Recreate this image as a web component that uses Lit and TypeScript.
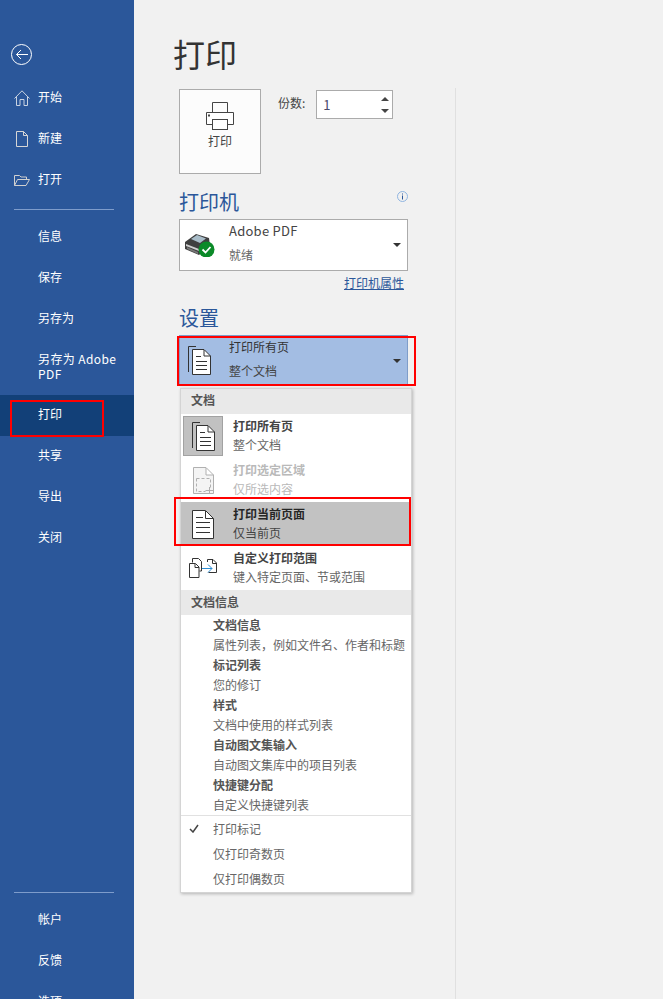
import { LitElement, html, css, svg } from "lit";
import { customElement } from "lit/decorators.js";

const icons = {
  home: html`<svg width="16" height="16" viewBox="0 0 16 16" fill="none" stroke="#c9d3e2"><path d="M.5 8.500 8 .8l7.500 7.700M2.500 6.500v9h3.500v-6h4v6h3.500v-9"/></svg>`,
  file: html`<svg width="12" height="16" viewBox="0 0 12 16" fill="none" stroke="#d6d6d6"><path d="M.5.5v15h11V4.500L7.500.5ZM7.500.5v4h4"/></svg>`,
  folder: html`<svg width="16" height="11" viewBox="0 0 16 11" fill="none" stroke="#d0d0d0"><path d="M.5 10.500V.5h5l1.500 1.500h5.500v2M.5 10.500h11.500l3.500-6H3.500Z"/></svg>`,
  printer: html`<svg width="28" height="28" viewBox="0 0 28 28" fill="none" stroke="#444"><path d="M6.500 10V.5h15V10"/><path d="M6.500 22.500h-6v-12h27v12h-6" fill="#fff"/><rect x="6.500" y="17.500" width="15" height="10" fill="#fff"/><rect x="2" y="12.500" width="2" height="2" fill="#444" stroke="none"/></svg>`,
  pages: html`<svg width="23" height="29" viewBox="0 0 23 29" fill="none" stroke="#333"><path d="M.5 26V.5H8"/><path d="M4.500 28.500v-25H16l6.500 6.500v18.500Z" fill="#fff"/><path d="M16 4v6h6.500M8 10.500h5M8 15.500h11M8 19.500h11M8 23.500h11"/></svg>`,
  selection: html`<svg width="21" height="27" viewBox="0 0 21 27" fill="#f4f4f4" stroke="#b0b0b0"><path d="M.5.5h12.500l7.500 7.500v18.500H.5ZM13 1v7h7.500"/><path d="M3.500 11.500h14v9M3.500 11.500v13h9" fill="none" stroke-dasharray="3 2"/><path d="M12.500 23.500h7.500M16.500 20v7" fill="none"/></svg>`,
  current: html`<svg width="22" height="29" viewBox="0 0 22 29" fill="#fff" stroke="#333"><path d="M.5.500H13.500L21.500 8.500V28.500H.5Z"/><path d="M13.500 1v7.500h8M4 7.500h7M4 12.500h14M4 17.500h14M4 22.500h14" fill="none"/></svg>`,
  custom: html`<svg width="28" height="20" viewBox="0 0 28 20" fill="none" stroke="#333"><path d="M3.500 4.500V.5h6l3 3v9.500h-2"/><path d="M.5 5.500h6l3.500 3.500v10.500H.5Z" fill="#fff"/><path d="M6 6v3.500h4"/><path d="M18.500 4V1.500h5.500l3.500 3.500v9.500h-8M23.500 2v3.500h4"/><path d="M13 10.500h10M19 6.500l4 4-4 4" stroke="#2a8dd4"/></svg>`,
  status: html`<svg width="30" height="24" viewBox="0 0 30 24"><path d="M0 9 11 1l13 4 1 8-11 9L0 16Z" fill="#3f3f3f"/><path d="M6 6l6-4 9 3.500-6 4.500Z" fill="#a9bdc9"/><path d="M1 11l13 5v2L1 13Z" fill="#cfcfcf"/><path d="M2 14l11 5v2L2 16Z" fill="#777"/><circle cx="21.500" cy="16.500" r="8" fill="#0b8a28"/><path d="M17.500 16.500l3 3 5-5.500" fill="none" stroke="#fff" stroke-width="1.800"/></svg>`,
};

@customElement("app-root")
export class AppRoot extends LitElement {
  static styles = css`
    :host {
      display: flex;
      width: 663px;
      height: 999px;
      overflow: hidden;
      background: #f1f1f1;
      font-family: "Microsoft YaHei", "Noto Sans CJK SC", "Noto Sans", sans-serif;
      font-size: 12px;
      color: #444;
      line-height: 16px;
    }
    * { box-sizing: border-box; }
    svg { display: block; flex: none; }

    .side {
      width: 134px;
      flex: none;
      background: #2b579a;
      color: #fff;
      display: flex;
      flex-direction: column;
    }
    .side > * { flex: none; }
    .back { padding: 44px 0 0 11px; height: 77px; }
    .nav {
      display: flex;
      align-items: center;
      height: 41px;
      padding: 0 12px 2px 38px;
      position: relative;
    }
    .nav.tall { height: 56px; line-height: 15px; letter-spacing: .4px; }
    .nav.low { padding-bottom: 4px; }
    .nav .ic { position: absolute; left: 13px; top: 1px; bottom: 0; width: 18px; display: flex; align-items: center; justify-content: center; }
    .nav.active { background: #124078; }
    .rule { height: 1px; background: #7e9ccb; margin: 9px 20px 6px 14px; }
    .gap { height: 324px; }

    .redbox { position: absolute; border: 2px solid #f00; pointer-events: none; z-index: 3; }
    .r1 { left: 10px; top: 400px; width: 94px; height: 37px; }
    .r2 { left: 177px; top: 336px; width: 239px; height: 50px; }
    .r3 { left: 174px; top: 497px; width: 237px; height: 49px; }

    .main { flex: none; width: 321px; padding: 0 0 0 45px; }
    h1 { margin: 33px 0 0 -6px; font-size: 32px; font-weight: 400; line-height: 40px; height: 56px; color: #333; }
    .top { display: flex; height: 85px; }
    .printbtn {
      width: 82px; height: 85px; background: #fcfcfc; border: 1px solid #ababab;
      display: flex; flex-direction: column; align-items: center; padding-top: 12px; gap: 3px; color: #444;
    }
    .copies { display: flex; align-items: flex-start; margin-left: 17px; gap: 11px; padding-top: 1px; }
    .copies span { line-height: 26px; }
    .num {
      width: 77px; height: 29px; background: #fff; border: 1px solid #ababab; display: flex;
      align-items: center; justify-content: space-between; padding: 0 3px 0 6px; font-size: 13px; color: #4a4a6a;
    }
    .spin { display: flex; flex-direction: column; gap: 8px; }
    .tri-up { width: 0; height: 0; border: 4px solid transparent; border-top: 0; border-bottom: 4px solid #444; }
    .tri-dn { width: 0; height: 0; border: 4px solid transparent; border-bottom: 0; border-top: 4px solid #444; }
    .headrow { display: flex; justify-content: space-between; width: 229px; margin-top: 14px; height: 31px; }
    h2 { margin: 0; font-size: 20px; font-weight: 400; line-height: 28px; color: #2b579a; }
    .info { margin-top: 3px; }
    .select {
      width: 229px; height: 52px; background: #fff; border: 1px solid #ababab; display: flex; align-items: stretch; position: relative;
    }
    .select .ico { width: 49px; display: flex; align-items: center; padding-left: 5px; }
    .select .txt { flex: 1; display: flex; flex-direction: column; justify-content: space-between; padding: 2px 0 6px; }
    .select .a { font-size: 13px; color: #444; line-height: 18px; letter-spacing: .25px; }
    .select .b { color: #666; line-height: 18px; }
    .select .arrow { align-self: center; margin-right: 6px; }
    .link { width: 225px; text-align: right; margin-top: 3px; height: 30px; line-height: 18px; color: #2b579a; text-decoration: underline; }
    .h2b { height: 31px; }
    .select.on { background: #a3bde3; border-color: #7f9dc9; height: 51px; }
    .select.on .a { color: #333; font-size: 12px; letter-spacing: 0; }
    .select.on .b { color: #444; }
    .select.on .txt { padding-bottom: 5px; }
    .select.on .ico { padding-left: 8px; }

    .menu {
      width: 232px; height: 505px; margin: 2px 0 0 1px; background: #fff; border: 1px solid #d4d4d4;
      box-shadow: 1px 1px 3px rgba(0,0,0,.25); display: flex; flex-direction: column; padding: 0;
    }
    .menu > * { flex: none; }
    .mh { height: 25px; background: #e9e9e9; font-weight: 700; color: #555; padding-left: 10px; line-height: 22px; }
    .mh.second { line-height: 24px; }
    .mi { height: 44px; display: flex; align-items: center; }
    .mi .box { width: 44px; height: 44px; margin-right: 8px; display: flex; align-items: center; justify-content: center; flex: none; }
    .mi .box.sel { width: 40px; height: 40px; margin: 0 10px 0 2px; background: #c1c1c1; border: 1px solid #a2a2a2; }
    .tx { margin-top: -2px; }
    .mi .t { font-weight: 700; color: #444; line-height: 19px; }
    .mi .s { color: #666; line-height: 19px; }
    .mi.dis .t, .mi.dis .s { color: #b9b9b9; }
    .mi.cur { background: #c2c2c2; }
    .mi.cur .t { color: #262626; }
    .mi.cur .s { color: #444; }
    .di { height: 40px; padding-left: 32px; }
    .di .t { font-weight: 700; color: #555; line-height: 20px; }
    .di .s { color: #666; line-height: 20px; white-space: nowrap; }
    .sep { height: 1px; background: #e1e1e1; }
    .opt { height: 25px; line-height: 25px; padding-left: 32px; color: #666; position: relative; }
    .chk { position: absolute; left: 8px; top: 8px; }

    .pane { flex: 1; }
    .pane div { margin-top: 88px; height: 911px; border-left: 1px solid #e0e0e0; }
  `;

  private nav(label: string, ic?: unknown, cls = "") {
    return html`<div class="nav ${cls}">${ic ? html`<span class="ic">${ic}</span>` : ""}<span>${label}</span></div>`;
  }

  render() {
    const arrow = html`<svg class="arrow" width="8" height="4" viewBox="0 0 8 4"><path d="M0 0h8L4 4Z" fill="#333"/></svg>`;
    return html`
      <div class="redbox r1"></div>
      <div class="redbox r2"></div>
      <div class="redbox r3"></div>

      <aside class="side">
        <div class="back">
          <svg width="21" height="21" viewBox="0 0 21 21" fill="none" stroke="#fff"><circle cx="10.500" cy="10.500" r="10"/><path d="M17 10.500H5.500M10 6 5.500 10.500 10 15"/></svg>
        </div>
        ${this.nav("开始", icons.home)}
        ${this.nav("新建", icons.file)}
        ${this.nav("打开", icons.folder)}
        <div class="rule"></div>
        ${this.nav("信息")}
        ${this.nav("保存")}
        ${this.nav("另存为")}
        ${this.nav("另存为 Adobe PDF", undefined, "tall")}
        ${this.nav("打印", undefined, "active low")}
        ${this.nav("共享", undefined, "low")}
        ${this.nav("导出", undefined, "low")}
        ${this.nav("关闭", undefined, "low")}
        <div class="gap"></div>
        <div class="rule"></div>
        ${this.nav("帐户")}
        ${this.nav("反馈")}
        ${this.nav("选项")}
      </aside>

      <main class="main">
        <h1>打印</h1>
        <div class="top">
          <div class="printbtn">${icons.printer}<span>打印</span></div>
          <div class="copies">
            <span>份数:</span>
            <div class="num">1<div class="spin"><i class="tri-up"></i><i class="tri-dn"></i></div></div>
          </div>
        </div>

        <div class="headrow">
          <h2>打印机</h2>
          <svg class="info" width="11" height="11" viewBox="0 0 11 11" fill="none"><circle cx="5.500" cy="5.500" r="5" stroke="#8fb4e0"/><path d="M5.500 4.500v4M5.500 2.500v1" stroke="#2b579a"/></svg>
        </div>
        <div class="select">
          <div class="ico">${icons.status}</div>
          <div class="txt"><span class="a">Adobe PDF</span><span class="b">就绪</span></div>
          ${arrow}
        </div>
        <div class="link">打印机属性</div>

        <div class="h2b"><h2>设置</h2></div>
        <div class="select on">
          <div class="ico">${icons.pages}</div>
          <div class="txt"><span class="a">打印所有页</span><span class="b">整个文档</span></div>
          ${arrow}
        </div>

        <div class="menu">
          <div class="mh">文档</div>
          <div class="mi">
            <div class="box sel">${icons.pages}</div>
            <div class="tx"><div class="t">打印所有页</div><div class="s">整个文档</div></div>
          </div>
          <div class="mi dis">
            <div class="box">${icons.selection}</div>
            <div class="tx"><div class="t">打印选定区域</div><div class="s">仅所选内容</div></div>
          </div>
          <div class="mi cur">
            <div class="box">${icons.current}</div>
            <div class="tx"><div class="t">打印当前页面</div><div class="s">仅当前页</div></div>
          </div>
          <div class="mi">
            <div class="box">${icons.custom}</div>
            <div class="tx"><div class="t">自定义打印范围</div><div class="s">键入特定页面、节或范围</div></div>
          </div>
          <div class="mh second">文档信息</div>
          <div class="di"><div class="t">文档信息</div><div class="s">属性列表，例如文件名、作者和标题</div></div>
          <div class="di"><div class="t">标记列表</div><div class="s">您的修订</div></div>
          <div class="di"><div class="t">样式</div><div class="s">文档中使用的样式列表</div></div>
          <div class="di"><div class="t">自动图文集输入</div><div class="s">自动图文集库中的项目列表</div></div>
          <div class="di"><div class="t">快捷键分配</div><div class="s">自定义快捷键列表</div></div>
          <div class="sep"></div>
          <div class="opt"><svg class="chk" width="10" height="9" viewBox="0 0 10 9" fill="none" stroke="#444" stroke-width="1.500"><path d="M1 5l3 3 5-7"/></svg>打印标记</div>
          <div class="opt">仅打印奇数页</div>
          <div class="opt">仅打印偶数页</div>
        </div>
      </main>
      <div class="pane"><div></div></div>
    `;
  }
}
